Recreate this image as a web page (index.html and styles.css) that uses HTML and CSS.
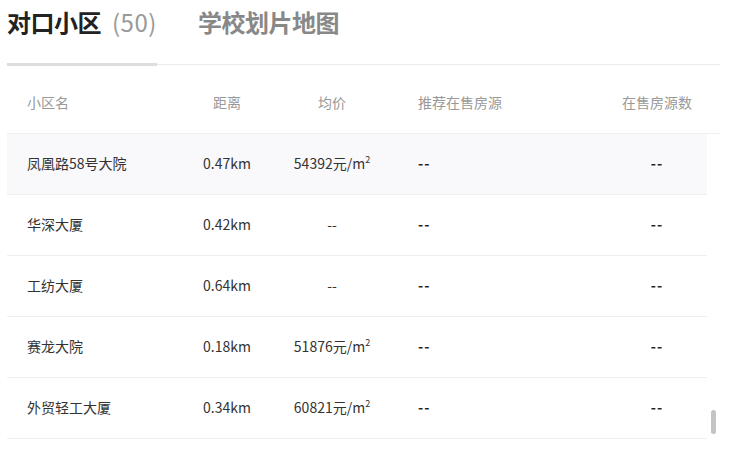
FILE: index.html
```html
<!DOCTYPE html>
<html lang="zh">
<head>
<meta charset="utf-8">
<link rel="stylesheet" href="styles.css">
</head>
<body>
<div class="page">
  <div class="tabs">
    <div class="tab active">对口小区<span class="count">(50)</span></div>
    <div class="tab">学校划片地图</div>
  </div>
  <div class="table">
    <div class="thead">
      <div class="c name">小区名</div>
      <div class="c mid">距离</div>
      <div class="c mid">均价</div>
      <div class="c rec">推荐在售房源</div>
      <div class="c mid">在售房源数</div>
    </div>
    <div class="row hover">
      <div class="c name">凤凰路58号大院</div>
      <div class="c mid">0.47km</div>
      <div class="c mid">54392元/m<sup>2</sup></div>
      <div class="c rec dash">--</div>
      <div class="c mid dash">--</div>
    </div>
    <div class="row">
      <div class="c name">华深大厦</div>
      <div class="c mid">0.42km</div>
      <div class="c mid">--</div>
      <div class="c rec dash">--</div>
      <div class="c mid dash">--</div>
    </div>
    <div class="row">
      <div class="c name">工纺大厦</div>
      <div class="c mid">0.64km</div>
      <div class="c mid">--</div>
      <div class="c rec dash">--</div>
      <div class="c mid dash">--</div>
    </div>
    <div class="row">
      <div class="c name">赛龙大院</div>
      <div class="c mid">0.18km</div>
      <div class="c mid">51876元/m<sup>2</sup></div>
      <div class="c rec dash">--</div>
      <div class="c mid dash">--</div>
    </div>
    <div class="row">
      <div class="c name">外贸轻工大厦</div>
      <div class="c mid">0.34km</div>
      <div class="c mid">60821元/m<sup>2</sup></div>
      <div class="c rec dash">--</div>
      <div class="c mid dash">--</div>
    </div>
    <div class="scroll-thumb"></div>
  </div>
</div>
</body>
</html>
```
FILE: styles.css
```css
html, body {
  margin: 0;
  padding: 0;
  background: #fff;
}
body {
  font-family: "Noto Sans CJK SC", "Noto Sans", sans-serif;
  width: 730px;
  height: 450px;
  overflow: hidden;
}
.page {
  padding-left: 7px;
  width: 713px;
}
.tabs {
  display: flex;
  gap: 41px;
  border-bottom: 1px solid #ebebef;
  height: 65px;
  box-sizing: border-box;
}
.tab {
  font-size: 24px;
  font-weight: bold;
  line-height: 24px;
  padding-top: 10px;
  color: #888;
  height: 64px;
  box-sizing: border-box;
  letter-spacing: -0.5px;
}
.tab.active {
  color: #222;
  width: 150px;
  border-bottom: 3px solid #dddddd;
  margin-bottom: -1px;
  height: 66px;
}
.count {
  font-weight: normal;
  color: #999;
  margin-left: 11px;
  letter-spacing: 0.5px;
}
.table {
  position: relative;
  font-size: 14px;
}
.thead, .row {
  display: grid;
  grid-template-columns: 180px 80px 130px 210px 100px;
  align-items: center;
}
.thead {
  height: 69px;
  padding-top: 6px;
  box-sizing: border-box;
  color: #999;
  border-bottom: 1px solid #f0f0f2;
}
.row {
  width: 700px;
  height: 61px;
  padding-bottom: 3px;
  box-sizing: border-box;
  border-bottom: 1px solid #efeff1;
  color: #333;
}
.row.hover {
  background: #f9f8fb;
}
.c {
  white-space: nowrap;
}
sup {
  font-size: 9px;
  line-height: 0;
  vertical-align: 6px;
}
.dash {
  color: #222;
  letter-spacing: 1px;
  font-weight: bold;
}
.name {
  padding-left: 20px;
}
.mid {
  text-align: center;
}
.rec {
  padding-left: 21px;
}
.scroll-thumb {
  position: absolute;
  left: 704px;
  top: 345px;
  width: 5px;
  height: 24px;
  border-radius: 3px;
  background: #c4c4c4;
}
```
